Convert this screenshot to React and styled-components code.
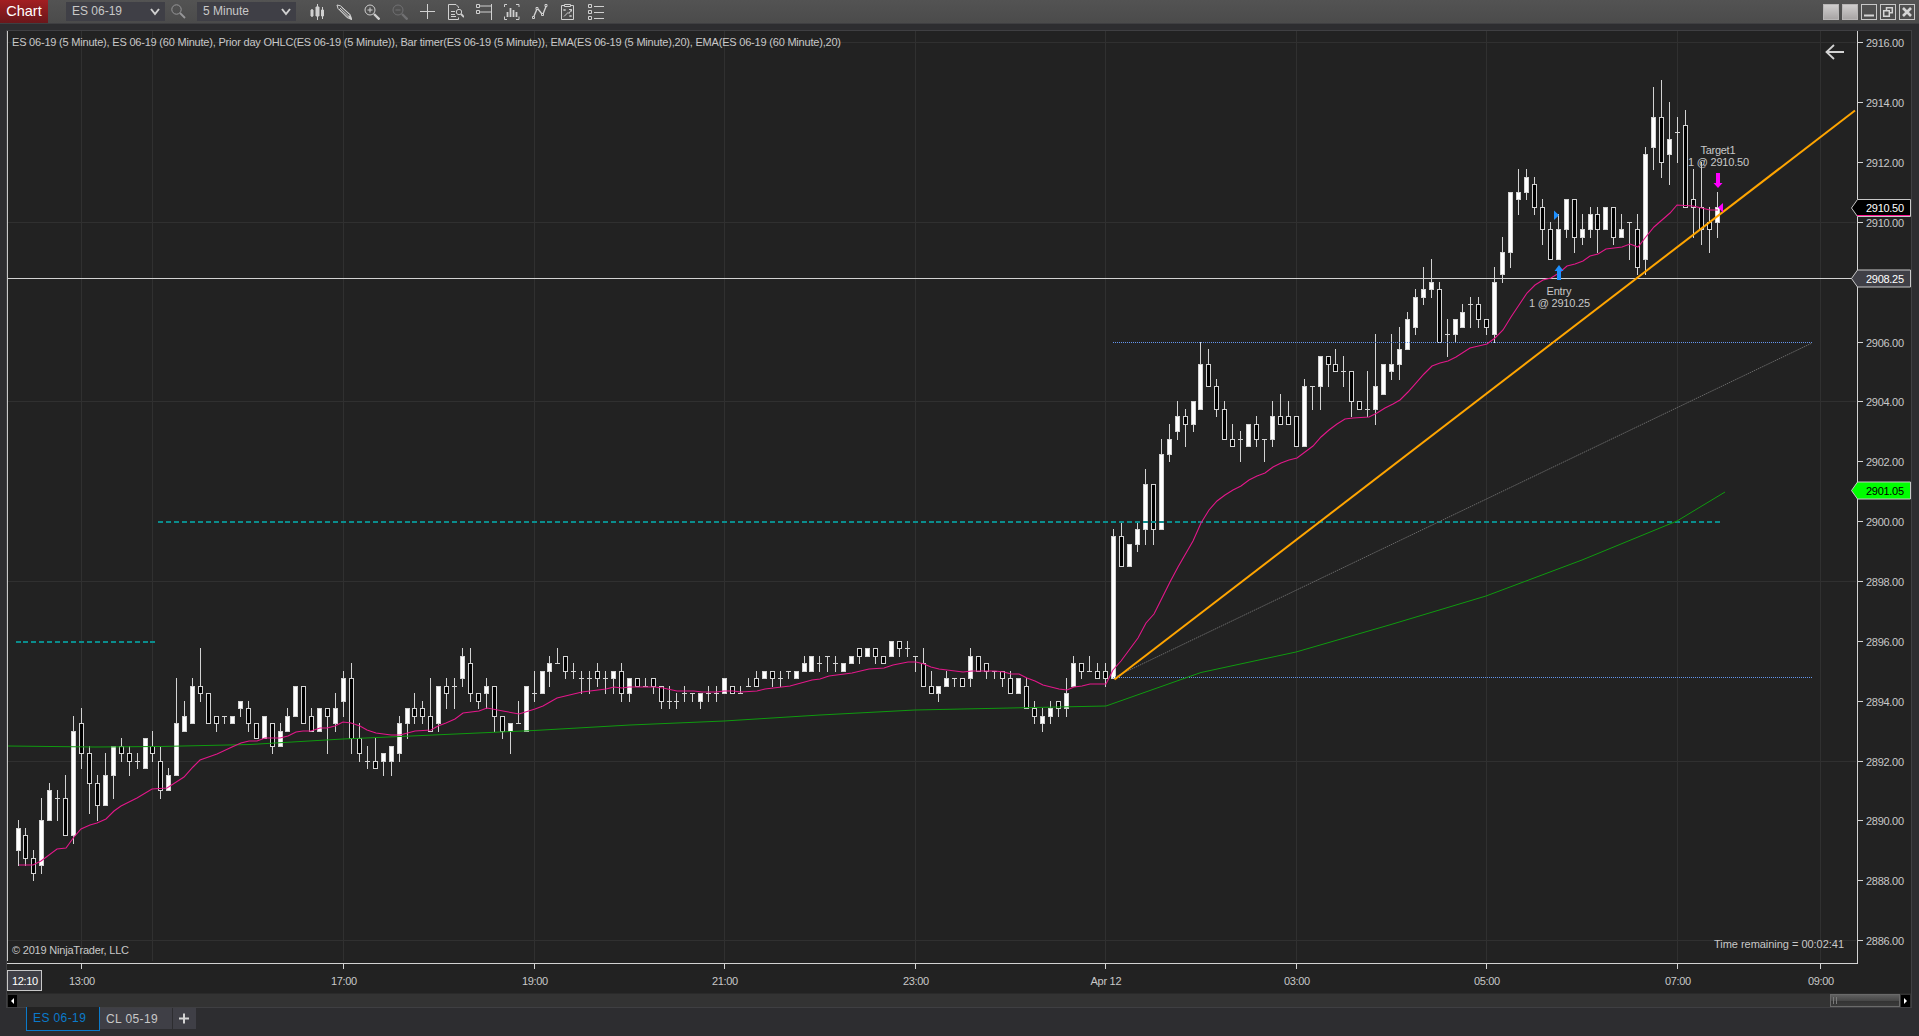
import React from "react"
import styled, { createGlobalStyle } from "styled-components"

const GlobalStyle = createGlobalStyle`
  html, body {
    margin: 0;
    background: #2d2d30;
    overflow: hidden;
  }
  * {
    box-sizing: border-box;
  }
`

const Window = styled.div`
  width: 1919px;
  height: 1036px;
  background: #2d2d30;
  font-family: "Liberation Sans", Arial, sans-serif;
  display: flex;
  flex-direction: column;
`

const TitleBar = styled.div`
  height: 24px;
  flex: none;
  display: flex;
  align-items: flex-start;
  background: linear-gradient(#535353, #4b4b4b);
  border-bottom: 1px solid #3f3f42;
`

const Badge = styled.div`
  width: 48px;
  height: 23px;
  line-height: 23px;
  font-size: 14.5px;
  text-align: center;
  color: #fff;
  background: linear-gradient(#a31e22, #6a171b);
`

const Select = styled.div`
  width: 99px;
  height: 19px;
  margin: 2px 0 0 ${props => props.gap}px;
  padding: 0 5px 0 6px;
  display: flex;
  align-items: center;
  justify-content: space-between;
  background: #3f3f46;
  color: #c8c8c8;
  font-size: 12px;
  line-height: 19px;
`

const Tool = styled.svg`
  display: block;
  width: 16px;
  height: 16px;
  margin: 4px 0 0 ${props => props.gap}px;
  fill: none;
  stroke: ${props => props.dim ? "#707072" : "#d0d0d0"};
  stroke-width: 1;
`

const WindowButtons = styled.div`
  display: flex;
  gap: 3px;
  margin: 4px 4px 0 auto;
`

const WindowButton = styled.div`
  width: 16px;
  height: 16px;
  border: 1px solid #c8c8c8;
  background: ${props => props.solid ? "linear-gradient(#d0cece, #a8a5a5)" : "none"};
  border-color: ${props => props.solid ? "#b8b6b6" : "#c8c8c8"};

  svg {
    display: block;
    fill: none;
    stroke: #d4d4d4;
  }
`

const Panel = styled.div`
  width: 1906px;
  height: 978px;
  flex: none;
  margin: 6px 0 0 6px;
  border: 1px solid #3f3f42;
  background: #222222;
`

const Plot = styled.svg`
  display: block;
  width: 1904px;
  height: 962px;
  font-size: 11px;
  fill: #c8c8c8;
`

const ScrollBar = styled.div`
  height: 14px;
  display: flex;
  align-items: center;
  background: #333333;
  border-top: 1px solid #2a2a2a;
  padding: 0 1px;
`

const ScrollArrow = styled.div`
  width: 9px;
  height: 12px;
  background: #000;

  svg {
    display: block;
    fill: #fff;
  }
`

const Thumb = styled.div`
  width: 70px;
  height: 13px;
  margin: 0 1px 0 auto;
  padding: 2px;
  display: flex;
  gap: 2px;
  border: 1px solid #6a6a6a;
  background: linear-gradient(#606060, #484848 50%, #333 51%, #3a3a3a);
`

const Grip = styled.div`
  width: 1px;
  height: 7px;
  background: #7a7a7a;
`

const Tabs = styled.div`
  display: flex;
  align-items: flex-start;
  margin-left: 26px;
`

const Tab = styled.div`
  width: ${props => props.width}px;
  height: ${props => props.active ? 24 : 21}px;
  margin: ${props => props.active ? "-1px 0 0" : "0 1px 0 0"};
  padding-left: 6px;
  font-size: 12px;
  letter-spacing: 0.4px;
  line-height: 22px;
  color: ${props => props.active ? "#0a7acb" : "#c8c8c8"};
  background: ${props => props.active ? "#222222" : "#3f3f46"};
  border: ${props => props.active ? "1px solid #0a7acb" : "none"};
  border-top: none;
`

const AddTab = styled.div`
  width: 23px;
  height: 21px;
  background: #3f3f46;

  svg {
    display: block;
  }
`

// top, bottom, high, low in ticks of 0.25 above 2892.00; top == bottom is a doji
const bars = [
  "W -9 -12 -8 -14", "B -10 -13 -9 -14", "B -13 -15 -12 -16", "W -8 -14 -5 -15", "W -4 -8 -3 -8",
  "D -5 -5 -4 -8", "B -5 -10 -2 -10", "W 4 -10 6 -11", "B 5 1 7 -1", "B 1 -3 2 -7",
  "B -3 -6 -2 -8", "W -2 -6 1 -6", "W 2 -2 2 -5", "B 2 1 3 0", "B 1 0 2 -2",
  "D 0 0 1 -1", "W 3 -1 3 -1", "B 2 1 4 0", "B 0 -4 2 -5", "W -2 -4 -1 -4",
  "W 5 -2 11 -2", "W 6 4 8 4", "W 10 5 11 5", "B 10 9 15 8", "B 9 5 9 5",
  "B 6 5 6 4", "D 6 6 6 5", "W 6 5 6 5", "W 8 7 8 6", "B 7 5 8 4",
  "B 5 3 5 3", "W 6 3 6 3", "B 5 2 5 1", "W 4 2 5 2", "W 6 4 7 4",
  "W 10 6 10 6", "B 10 5 10 5", "B 6 4 7 4", "W 7 4 7 4", "B 7 6 7 1",
  "W 7 5 9 4", "W 11 8 12 6", "B 11 3 13 1", "B 3 1 5 0", "D 0 0 2 -1",
  "B 0 -1 3 -1", "W 1 0 1 -2", "W 2 0 2 -2", "W 5 1 6 0", "W 7 5 7 3",
  "B 7 6 9 5", "B 7 6 8 5", "B 6 4 11 4", "W 10 5 10 4", "B 10 9 11 7",
  "D 10 10 11 7", "W 14 11 15 10", "B 13 9 15 8", "B 9 8 9 7", "W 10 9 11 7",
  "B 10 6 10 4", "B 6 4 6 3", "W 5 4 5 1", "D 5 5 8 5", "W 10 4 10 4",
  "D 9 9 12 8", "W 12 9 12 9", "W 13 12 14 10", "D 13 13 15 13", "B 14 12 14 11",
  "D 12 12 13 11", "D 11 11 12 9", "D 11 11 12 9", "B 12 11 13 10", "D 11 11 12 9",
  "W 12 11 12 9", "B 12 9 13 8", "W 11 9 11 8", "B 11 10 11 10", "D 10 10 11 10",
  "B 11 10 11 9", "B 10 8 10 7", "D 8 8 10 7", "D 8 8 9 7", "D 9 9 10 8",
  "D 9 9 9 8", "W 9 8 9 7", "D 9 9 10 8", "D 9 9 10 8", "W 11 9 11 9",
  "B 10 9 10 9", "D 9 9 10 9", "D 10 10 11 10", "B 11 10 12 10", "W 12 11 12 11",
  "B 12 11 12 10", "D 11 11 12 10", "D 12 12 12 11", "W 12 11 12 11", "W 13 12 14 12",
  "W 14 12 14 12", "D 13 13 14 12", "D 14 14 14 12", "D 13 13 14 12", "W 13 12 13 12",
  "W 14 13 14 13", "B 15 14 15 13", "W 15 14 15 14", "B 15 14 15 13", "B 14 13 14 13",
  "W 16 14 16 14", "B 16 15 16 14", "D 15 15 16 14", "D 14 14 14 12", "B 13 10 15 10",
  "B 10 9 12 9", "W 10 9 10 8", "W 11 10 12 10", "D 11 11 11 10", "B 11 10 11 10",
  "W 14 11 15 10", "B 14 12 14 12", "B 13 12 13 11", "D 12 12 12 11", "B 12 11 12 10",
  "B 11 9 12 9", "W 11 9 11 9", "B 10 7 11 7", "B 7 6 8 5", "W 6 5 7 4",
  "W 7 6 8 5", "B 8 7 8 6", "W 9 7 11 6", "W 13 10 14 10", "B 13 12 13 11",
  "D 12 12 14 12", "B 12 11 13 11", "B 12 11 13 10", "W 30 11 31 11", "B 30 26 32 26",
  "W 29 26 29 26", "W 31 29 32 28", "W 37 31 39 29", "B 37 31 37 29", "W 41 31 43 31",
  "W 43 41 45 40", "W 46 44 48 43", "B 46 45 47 42", "W 48 45 48 44", "W 53 47 56 47",
  "B 53 50 55 50", "B 50 47 51 46", "B 47 43 48 43", "B 43 42 45 42", "D 43 43 44 40",
  "W 45 42 45 42", "B 45 43 46 42", "D 43 43 43 40", "W 46 43 48 42", "B 46 45 49 45",
  "B 46 45 48 45", "B 46 42 46 42", "W 50 42 51 42", "D 50 50 50 47", "W 54 50 54 47",
  "B 54 53 54 50", "B 53 52 55 52", "D 52 52 54 50", "B 52 48 52 46", "B 48 47 48 47",
  "D 47 47 52 46", "W 50 47 57 45", "W 53 49 53 49", "W 53 52 57 51", "W 55 53 58 51",
  "W 59 55 60 55", "W 62 58 63 57", "W 63 62 66 61", "W 64 63 67 62", "B 63 56 64 56",
  "D 57 57 59 54", "W 59 57 59 56", "W 60 58 61 58", "D 61 61 62 58", "B 61 59 62 58",
  "B 59 58 59 57", "W 64 57 66 56", "W 68 65 70 64", "W 76 68 76 66", "W 76 75 79 73",
  "W 78 76 79 75", "B 77 74 78 73", "B 74 71 75 69", "B 71 67 72 67", "W 71 67 73 67",
  "W 75 71 75 70", "B 75 70 75 68", "W 71 70 73 69", "W 73 71 74 70", "B 73 71 74 68",
  "W 74 71 74 71", "B 74 70 74 69", "W 71 70 73 70", "D 72 72 72 67", "B 71 66 73 65",
  "W 81 67 82 65", "W 86 82 90 79", "B 86 80 91 78", "W 83 81 88 77", "D 84 84 86 80",
  "B 85 74 87 74", "B 75 74 79 70", "B 74 71 80 69", "B 72 71 74 68", "W 74 72 76 70",
].map((s) => {
  const [kind, ...n] = s.split(" ")
  return [kind, ...n.map(Number)]
})

const fastEma = "19,865 33,865 41,861 57,849 66,848 74,837 81,829 90,825 97,823 106,819 114,811 121,806 137,798 152,789 167,788 184,777 193,767 200,760 217,754 232,747 241,743 249,741 257,741 265,738 280,738 288,736 296,732 303,731 311,731 320,728 327,728 335,726 343,722 351,723 360,726 367,730 376,733 391,735 400,735 415,731 431,730 438,726 446,723 455,719 463,713 479,711 487,708 503,711 519,714 535,709 543,706 550,702 557,698 582,692 606,689 614,687 622,688 629,687 655,687 663,688 677,691 694,691 702,692 716,692 724,691 733,691 741,692 757,691 765,689 790,686 812,680 820,679 829,676 852,673 869,669 884,668 893,665 908,662 916,662 924,664 931,667 939,669 963,672 972,671 995,671 1004,672 1011,674 1019,674 1027,678 1035,681 1043,685 1059,689 1067,690 1074,687 1082,686 1090,684 1106,684 1113,670 1121,661 1138,638 1146,623 1154,614 1162,598 1170,582 1178,567 1193,541 1201,523 1209,510 1217,501 1225,495 1233,490 1241,486 1249,480 1257,476 1265,473 1273,467 1281,463 1289,460 1297,458 1313,446 1321,437 1329,430 1337,424 1345,419 1353,418 1369,417 1377,413 1385,408 1393,404 1400,400 1408,392 1424,374 1432,366 1440,363 1448,361 1456,357 1470,348 1487,344 1495,338 1503,330 1511,317 1519,305 1527,293 1535,285 1543,280 1551,278 1559,273 1567,266 1575,264 1583,261 1590,256 1598,254 1606,249 1622,247 1630,244 1638,247 1645,238 1654,227 1670,213 1677,205 1693,206 1710,210 1718,210"
const slowEma = "8,746 95,747 160,746.5 250,744.5 343,739 400,736.5 534,730.5 630,725 724,721 820,715 915,710 1106,706 1201,672.5 1296,652 1391,624.5 1486,596 1582,560 1677,521 1725,492"

const times = [[81, "13:00"], [343, "17:00"], [534, "19:00"], [724, "21:00"], [915, "23:00"],
  [1105, "Apr 12"], [1296, "03:00"], [1486, "05:00"], [1677, "07:00"], [1820, "09:00"]]
const gridX = [81, 152, 343, 534, 724, 915, 1105, 1296, 1486, 1677, 1820]
const prices = Array.from({ length: 16 }, (_, i) => 2916 - i * 2)

const priceY = (p) => Math.round(42.2 + (2916 - p) * 29.93)
const tickY = (t) => priceY(2892 + t / 4)
const barX = (i) => 18 + 8 * i - Math.ceil(i / 16.5)

function Label({ x, y, w, anchor, color, children }) {
  return (
    <text x={x} y={y} textLength={w} textAnchor={anchor} fill={color}>{children}</text>
  )
}

function Candle({ index, bar }) {
  const [kind, top, bottom, high, low] = bar
  const x = barX(index)
  const y = tickY(top)
  return (
    <g>
      <rect x={x} y={tickY(high)} width="1" height={tickY(low) - tickY(high) + 1} fill="#d3d3d3" />
      {kind === "D"
        ? <rect x={x - 2} y={y} width="5" height="1" fill="#d3d3d3" />
        : <rect x={x - 1.5} y={y + 0.5} width="4" height={tickY(bottom) - y}
            fill={kind === "W" ? "#fff" : "#000"} stroke="#d3d3d3" />}
    </g>
  )
}

function PriceTag({ y, fill, color, value, under }) {
  return (
    <g>
      <path d={`M1851.5 ${y} L1857.5 ${y - 8.5} H1910.5 V${y + 8.5} H1857.5 Z`} fill={fill} stroke="#c8c8c8" />
      {under && <path d={`M1857 ${y + 7.5} H1910`} stroke={under} />}
      <Label x={1866} y={y + 4} w={38} color={color}>{value}</Label>
    </g>
  )
}

function Chart() {
  return (
    <Plot viewBox="7 31 1904 962">
      <g shapeRendering="crispEdges">
        {gridX.map((x) => <rect key={x} x={x} y="31" width="1" height="930" fill="#303030" />)}
        {prices.filter((p) => p % 6 === 0).map((p) => (
          <rect key={p} x="8" y={priceY(p)} width="1848" height="1" fill="#303030" />
        ))}
        <rect x="7" y="31" width="1" height="930" fill="#c8c8c8" />
        <rect x="7" y="963" width="1851" height="1" fill="#d3d3d3" />
        <rect x="1857" y="31" width="1" height="933" fill="#d3d3d3" />
        {times.map(([x]) => <rect key={x} x={x} y="964" width="1" height="5" fill="#d3d3d3" />)}
        {prices.map((p) => <rect key={p} x="1858" y={priceY(p)} width="5" height="1" fill="#d3d3d3" />)}
        {bars.map((bar, i) => <Candle key={i} index={i} bar={bar} />)}
        {bars.map((bar, i) => (
          <rect key={i} x={barX(i) - 2} y={i < 18 ? 641 : 521} width="5" height="2" fill="#0b8c8c" />
        ))}
        <rect x="8" y="278" width="1845" height="1" fill="#d3d3d3" />
        <path d="M1113 342.5 H1812 M1113 677.5 H1812" stroke="#6495ed" strokeDasharray="1 1" />
      </g>
      <g fill="none">
        <path d="M1115 677 L1812 343" stroke="#696969" strokeDasharray="1.5 0.8" />
        <polyline points={slowEma} stroke="#0f9a0f" strokeWidth="1" />
        <polyline points={fastEma} stroke="#e3178a" strokeWidth="1.1" />
        <path d="M1114.500 679.500 L1855 110.500" stroke="#ffa500" strokeWidth="2" />
        <path d="M1844 52 H1826 M1834 45 L1826.500 52 L1834 59" stroke="#d3d3d3" strokeWidth="1.8" />
      </g>

      <path d="M1554 210.500 V220 L1559 215.300 Z" fill="#1e90ff" />
      <path d="M1559 265 L1563.500 271 H1561 V280 H1557 V271 H1554.500 Z" fill="#1e90ff" />
      <path d="M1723 203 V212.500 L1718 207.500 Z" fill="#ff00ff" />
      <path d="M1716 173 H1720 V183 H1722.500 L1718 188 L1713.500 183 H1716 Z" fill="#ff00ff" />

      <Label x={1559} y={295} w={25} anchor="middle">Entry</Label>
      <Label x={1559.5} y={307} w={61} anchor="middle">1 @ 2910.25</Label>
      <Label x={1718} y={154} w={35} anchor="middle">Target1</Label>
      <Label x={1718.5} y={166} w={61} anchor="middle">1 @ 2910.50</Label>

      <Label x={12} y={46} w={829}>
        ES 06-19 (5 Minute), ES 06-19 (60 Minute), Prior day OHLC(ES 06-19 (5 Minute)), Bar timer(ES 06-19 (5 Minute)), EMA(ES 06-19 (5 Minute),20), EMA(ES 06-19 (60 Minute),20)
      </Label>
      <Label x={12} y={954} w={117}>© 2019 NinjaTrader, LLC</Label>
      <Label x={1714} y={948} w={130}>Time remaining = 00:02:41</Label>

      {prices.filter((p) => p !== 2908).map((p) => (
        <Label key={p} x={1866} y={priceY(p) + 4.5} w={38}>{p.toFixed(2)}</Label>
      ))}
      {times.map(([x, text]) => (
        <Label key={x} x={x + 1} y={985} w={text === "Apr 12" ? 31 : 26} anchor="middle">{text}</Label>
      ))}

      <PriceTag y={208} fill="#000" color="#fff" value="2910.50" under="#ff1493" />
      <PriceTag y={278.5} fill="#3f3f46" color="#fff" value="2908.25" />
      <PriceTag y={490.5} fill="#00ff00" color="#000" value="2901.05" />

      <rect x="7.5" y="970.500" width="34" height="20" fill="#3f3f46" stroke="#c8c8c8" />
      <Label x={25} y={984.5} w={26} anchor="middle" color="#fff">12:10</Label>
    </Plot>
  )
}

function Chevron() {
  return (
    <svg width="10" height="8" viewBox="0 0 10 8" fill="none" stroke="#d0d0d0" strokeWidth="2">
      <path d="M1 1 L5 6 L9 1" />
    </svg>
  )
}

function Tools() {
  return (
    <>
      <Tool gap={14}>
        <path d="M2 5v8M7.500 0v16M12.500 3v12" />
        <path d="M1 6h2v6h-2zM6 3h3v9h-3zM11.500 6h2v6h-2z" fill="#d0d0d0" />
      </Tool>
      <Tool gap={10}>
        <path d="M1 1l3.500 .8L14 10.500 11 13.500 2 4.500zM11 13.500l4.500 2L14 10.500" />
        <path d="M4 4l8 7.500M5.500 3l8 7.500M3 5l8 7.500" />
        <path d="M12.500 13l3 2.500-1-3.500z" fill="#d0d0d0" />
      </Tool>
      <Tool gap={12}>
        <circle cx="6" cy="6" r="5" />
        <path d="M3.500 6h5M6 3.500v5" />
        <path d="M10 10l5.500 5.500" strokeWidth="2.4" />
      </Tool>
      <Tool gap={12} dim="true">
        <circle cx="6" cy="6" r="5" />
        <path d="M3.500 6h5" />
        <path d="M10 10l5.500 5.500" strokeWidth="2.4" />
      </Tool>
      <Tool gap={12}>
        <path d="M0 7.500h15M7.500 0v15" />
      </Tool>
      <Tool gap={12}>
        <path d="M10.500 4V3L8 .5H.5v15h10v-2M3 7.500h4M3 10.500h4M3 12.500h5" />
        <circle cx="11" cy="8" r="2.700" />
        <path d="M13 10l3 3" strokeWidth="1.800" />
      </Tool>
      <Tool gap={12}>
        <path d="M.5.500h3v3h-3zM.5 6.500h3v3h-3zM3.500 2h12M3.500 8h12M15.500 0v16" />
      </Tool>
      <Tool gap={12}>
        <path d="M.5 3V.5H3M12 .5h3V3M.5 12.500v3H3M12 15.500h3v-3" />
        <path d="M3.500 8v5M6.500 4v9M9.500 6v7M12.500 8v5" strokeWidth="1.800" />
      </Tool>
      <Tool gap={12}>
        <path d="M2 12l3-7M6 5l4 5M11 10l3-7.500" strokeWidth="1.400" />
        <path d="M.5 12.500h2v2h-2zM4 3.500h2v2h-2zM9.500 9.500h2v2h-2zM13 .5h2v2h-2z" />
      </Tool>
      <Tool gap={12}>
        <path d="M4 1.500H1.500v14h12v-14H11M4.500.5h6v2h-6z" />
        <path d="M3.500 5l2 2m0-2l-2 2M9.500 11l2 2m0-2l-2 2M4 12.500l4-4 1 1 2.500-4M9 5.500h2.500v2" />
      </Tool>
      <Tool gap={12}>
        <path d="M.5.500h3v3h-3zM.5 6.500h3v3h-3zM.5 12.500h3v3h-3zM6 2.500h10M6 8.500h10M6 14.500h10" />
      </Tool>
    </>
  )
}

export default function App() {
  return (
    <Window>
      <GlobalStyle />
      <TitleBar>
        <Badge>Chart</Badge>
        <Select gap={18}>ES 06-19 <Chevron /></Select>
        <Tool gap={6} style={{ stroke: "#979799" }}>
          <circle cx="5.500" cy="5.500" r="4.700" />
          <path d="M9 9l5 5" strokeWidth="1.800" />
        </Tool>
        <Select gap={10}>5 Minute <Chevron /></Select>
        <Tools />
        <WindowButtons>
          <WindowButton solid="true" />
          <WindowButton solid="true" />
          <WindowButton>
            <svg width="14" height="14"><path d="M2 10.500h10" strokeWidth="2" /></svg>
          </WindowButton>
          <WindowButton>
            <svg width="14" height="14" strokeWidth="1.500">
              <path d="M5.500 5V2.700h5.800v5H9M2.700 5.700h5.600v5.500H2.700z" />
            </svg>
          </WindowButton>
          <WindowButton>
            <svg width="14" height="14"><path d="M3 3l8 8M11 3l-8 8" strokeWidth="2.600" /></svg>
          </WindowButton>
        </WindowButtons>
      </TitleBar>
      <Panel>
        <Chart />
        <ScrollBar>
          <ScrollArrow><svg width="9" height="12"><path d="M6 3v6L3 6z" /></svg></ScrollArrow>
          <Thumb><Grip /><Grip /></Thumb>
          <ScrollArrow><svg width="9" height="12"><path d="M3 3v6l3-3z" /></svg></ScrollArrow>
        </ScrollBar>
      </Panel>
      <Tabs>
        <Tab active="true" width={74}>ES 06-19</Tab>
        <Tab width={72}>CL 05-19</Tab>
        <AddTab>
          <svg width="23" height="21"><path d="M6 10.500h10M11 5.500v10" stroke="#d4d4d4" strokeWidth="2" /></svg>
        </AddTab>
      </Tabs>
    </Window>
  )
}
